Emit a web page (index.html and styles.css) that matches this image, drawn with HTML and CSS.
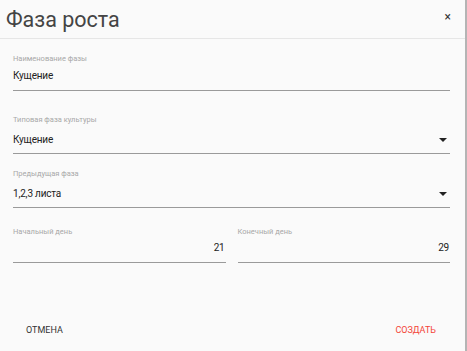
FILE: index.html
```html
<!DOCTYPE html>
<html>

<head>
    <title>Фаза роста</title>
    <link rel="stylesheet" href="styles.css">
</head>

<body>
    <div class="dialog">
        <div class="dialog-head">
            <h1>Фаза роста</h1>
            <span class="close">&#215;</span>
        </div>

        <div class="dialog-body">
            <div class="field">
                <label>Наименование фазы</label>
                <div class="value">Кущение</div>
            </div>

            <div class="field field-select">
                <label>Типовая фаза культуры</label>
                <div class="value">Кущение <span class="arrow"></span></div>
            </div>

            <div class="field field-select">
                <label>Предыдущая фаза</label>
                <div class="value">1,2,3 листа <span class="arrow"></span></div>
            </div>

            <div class="row">
                <div class="field">
                    <label>Начальный день</label>
                    <div class="value number">21</div>
                </div>
                <div class="field">
                    <label>Конечный день</label>
                    <div class="value number">29</div>
                </div>
            </div>
        </div>

        <div class="dialog-actions">
            <button class="btn">ОТМЕНА</button>
            <button class="btn btn-primary">СОЗДАТЬ</button>
        </div>
    </div>
</body>

</html>
```

FILE: styles.css
```css
body {
    margin: 0;
    padding: 0;
    background-color: #fafafa;
    font-family: Roboto, "Noto Sans", sans-serif;
}

.dialog {
    width: 465px;
    height: 351px;
    border-right: 2px solid #b4b4b4;
    background-color: #fafafa;
    display: flex;
    flex-direction: column;
}

.dialog-head {
    height: 38px;
    border-bottom: 1px solid #e6e6e6;
    display: flex;
    align-items: center;
    justify-content: space-between;
    padding: 0 14px 0 6px;
}

h1 {
    margin: 0;
    font-family: Roboto, sans-serif;
    font-weight: 400;
    font-size: 21.5px;
    color: #444;
}

.close {
    font-size: 12px;
    color: #333;
    position: relative;
    top: -2px;
}

.dialog-body {
    padding: 14px 15px 0 13px;
    display: flex;
    flex-direction: column;
}

.field {
    display: flex;
    flex-direction: column;
    border-bottom: 1px solid #9a9a9a;
    margin-bottom: 23px;
}

label {
    font-size: 7.5px;
    color: #a8a8a8;
    height: 12px;
    line-height: 12px;
}

.value {
    font-size: 10px;
    letter-spacing: -0.2px;
    color: #222;
    height: 25px;
    line-height: 22px;
    display: flex;
    justify-content: space-between;
    align-items: flex-start;
}

.field-select {
    margin-bottom: 14px;
}

.field-select .value {
    height: 23px;
    line-height: 20px;
    padding-top: 4px;
}

.arrow {
    width: 0;
    height: 0;
    border-left: 4px solid transparent;
    border-right: 4px solid transparent;
    border-top: 4px solid #222;
    margin-top: 8px;
    margin-right: 3px;
}

.number {
    justify-content: flex-end;
    padding-right: 1px;
    height: 24px;
    line-height: 20px;
}

.row {
    display: grid;
    grid-template-columns: 1fr 1fr;
    gap: 12px;
    margin-top: 4px;
}

.dialog-actions {
    margin-top: auto;
    height: 42px;
    display: flex;
    justify-content: space-between;
    align-items: center;
    padding: 0 23px 0 20px;
}

.btn {
    font-family: Roboto, sans-serif;
    font-size: 9px;
    background: none;
    border: none;
    padding: 4px 6px;
    color: #333;
    cursor: pointer;
}

.btn-primary {
    color: #f44336;
}
```
